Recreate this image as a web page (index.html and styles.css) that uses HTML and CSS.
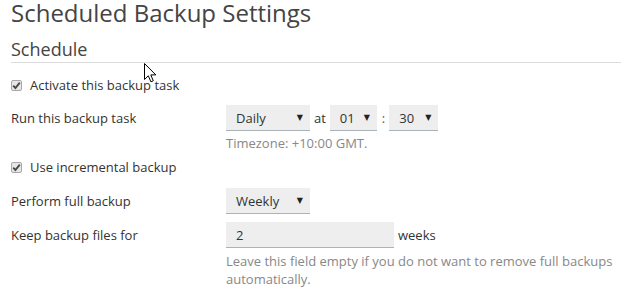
FILE: index.html
```html
<!DOCTYPE html>
<html>
<head>
<meta charset="utf-8">
<link rel="stylesheet" href="styles.css">
</head>
<body>
<div class="page">
  <h1 class="title">Scheduled Backup Settings</h1>
  <h2 class="section">Schedule</h2>

  <div class="check-row first">
    <span class="checkbox"><svg width="9" height="9" viewBox="0 0 9 9"><path d="M1.2 4.6 L3.4 7 L7.8 1.6" fill="none" stroke="#4a4a4a" stroke-width="1.9"/></svg></span>
    <span class="check-label">Activate this backup task</span>
  </div>

  <div class="row run">
    <div class="label">Run this backup task</div>
    <div class="controls">
      <div class="select w-daily"><span class="val">Daily</span><span class="arrow">▼</span></div>
      <span class="sep at">at</span>
      <div class="select w-hour"><span class="val">01</span><span class="arrow">▼</span></div>
      <span class="sep colon">:</span>
      <div class="select w-min"><span class="val">30</span><span class="arrow">▼</span></div>
    </div>
  </div>
  <div class="help tz">Timezone: +10:00 GMT.</div>

  <div class="check-row second">
    <span class="checkbox"><svg width="9" height="9" viewBox="0 0 9 9"><path d="M1.2 4.6 L3.4 7 L7.8 1.6" fill="none" stroke="#4a4a4a" stroke-width="1.9"/></svg></span>
    <span class="check-label">Use incremental backup</span>
  </div>

  <div class="row full">
    <div class="label">Perform full backup</div>
    <div class="controls">
      <div class="select w-daily"><span class="val">Weekly</span><span class="arrow">▼</span></div>
    </div>
  </div>

  <div class="row keep">
    <div class="label">Keep backup files for</div>
    <div class="controls">
      <div class="input"><span class="val">2</span></div>
      <span class="sep">weeks</span>
    </div>
  </div>
  <div class="help keep-help">Leave this field empty if you do not want to remove full backups<br>automatically.</div>

  <svg class="cursor" width="13" height="20" viewBox="0 0 13 20"><path d="M0.5 0.5 L0.5 16.5 L4.3 12.8 L6.9 18.8 L9.3 17.8 L6.8 11.9 L11.8 11.9 Z" fill="#fff" stroke="#000" stroke-width="1"/></svg>
</div>
</body>
</html>
```

FILE: styles.css
```css
html, body {
  margin: 0;
  padding: 0;
  background: #fff;
}
body {
  font-family: "Open Sans", "Noto Sans", sans-serif;
  font-size: 13px;
  color: #333;
}
.page {
  position: relative;
  padding-left: 11px;
  width: 610px;
}
.title {
  margin: 0;
  font-size: 24px;
  line-height: 26px;
  font-weight: 400;
  color: #444;
}
.section {
  margin: 11px 0 0 0;
  font-size: 18px;
  line-height: 24px;
  font-weight: 400;
  color: #444;
  padding-bottom: 1px;
  border-bottom: 1px solid #ddd;
}
.check-row {
  display: flex;
  align-items: center;
  height: 18px;
  line-height: 18px;
}
.check-row.first { margin-top: 13px; }
.check-row.second { margin-top: 6px; }
.checkbox {
  box-sizing: border-box;
  width: 11px;
  height: 11px;
  border: 1px solid #a8a8a8;
  border-radius: 2px;
  background: #e6e6e6;
  display: flex;
  align-items: center;
  justify-content: center;
  margin-right: 8px;
}
.checkbox svg { display: block; }
.row {
  display: flex;
  align-items: center;
  line-height: 18px;
}
.row.run { margin-top: 11px; }
.row.full { margin-top: 12px; }
.row.keep { margin-top: 8px; }
.label {
  width: 215px;
  flex: none;
}
.controls {
  display: flex;
  align-items: center;
}
.select, .input {
  box-sizing: border-box;
  height: 26px;
  background: #eeeeee;
  border-bottom: 1px solid #aab2ba;
  display: flex;
  align-items: center;
  justify-content: space-between;
  padding: 0 7px 0 10px;
  color: #333;
}
.w-daily { width: 84px; }
.w-hour { width: 47px; }
.w-min { width: 49px; }
.input { width: 168px; padding-left: 10px; }
.arrow {
  font-size: 8px;
  color: #222;
  font-family: "DejaVu Sans", sans-serif;
}
.sep {
  margin: 0 4px;
}
.at { margin: 0 4px 0 4px; }
.colon { margin: 0 4px 0 5px; color: #555; }
.help {
  color: #888;
  margin-left: 215px;
  line-height: 18px;
}
.tz { margin-top: 3px; }
.keep-help { margin-top: 4px; }
.cursor {
  position: absolute;
  left: 144px;
  top: 63px;
}
```
